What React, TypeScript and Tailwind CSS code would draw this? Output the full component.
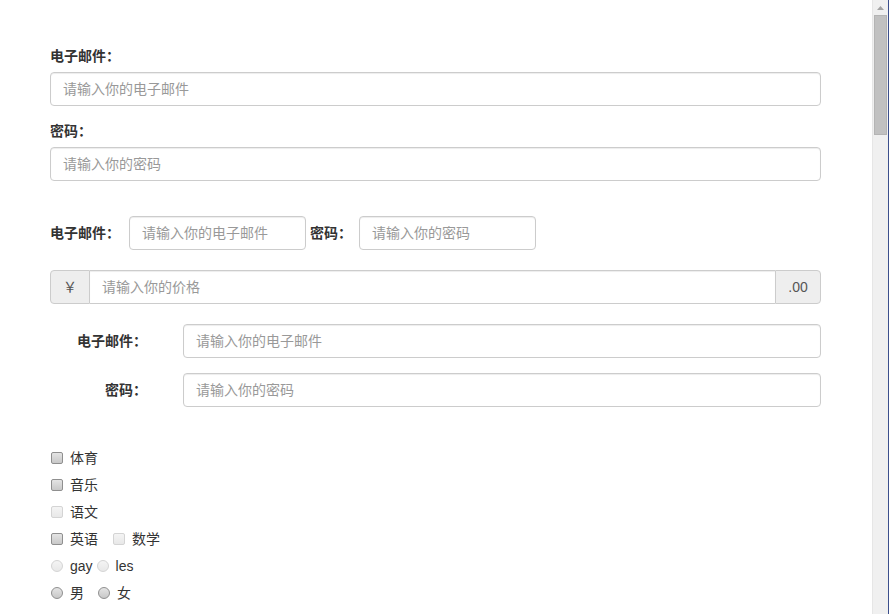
const font = { fontFamily: '"Liberation Sans", "Noto Sans CJK SC", sans-serif' }

const inputCls =
    "h-[34px] rounded-[4px] border border-[#cccccc] bg-white px-3 text-[14px] text-[#555] placeholder:text-[#999] shadow-[inset_0_1px_1px_rgba(0,0,0,0.075)] outline-none"

const Box = ({ disabled, round }: { disabled?: boolean, round?: boolean }) => (
    <span
        className={
            "inline-block w-[12px] h-[12px] border shrink-0 " +
            (round ? "rounded-full " : "rounded-[2px] ") +
            (disabled
                ? "border-[#d4d4d4] bg-gradient-to-b from-[#f4f4f4] to-[#e8e8e8]"
                : "border-[#8f8f8f] bg-gradient-to-b from-[#e4e4e4] to-[#c8c8c8]")
        }
    />
)

const Check = ({ label, disabled, round, className = "" }: { label: string, disabled?: boolean, round?: boolean, className?: string }) => (
    <label className={"inline-flex items-center gap-[7px] " + className}>
        <Box disabled={disabled} round={round} />
        <span>{label}</span>
    </label>
)

export default function App() {
    return (
        <div className="flex h-[614px] overflow-hidden bg-white text-[14px] text-[#333]" style={font}>
            <div className="flex-1 pl-[50px] pr-[51px] pt-[46px]">
                {/* basic form */}
                <div className="flex flex-col">
                    <label className="font-bold leading-5 mb-[6px]">电子邮件：</label>
                    <input className={inputCls + " w-full"} placeholder="请输入你的电子邮件" />
                </div>
                <div className="flex flex-col mt-[15px]">
                    <label className="font-bold leading-5 mb-[6px]">密码：</label>
                    <input className={inputCls + " w-full"} placeholder="请输入你的密码" />
                </div>

                {/* inline form */}
                <div className="flex items-center mt-[35px]">
                    <label className="font-bold">电子邮件：</label>
                    <input className={inputCls + " w-[177px] ml-[9px]"} placeholder="请输入你的电子邮件" />
                    <label className="font-bold ml-[4px]">密码：</label>
                    <input className={inputCls + " w-[177px] ml-[7px]"} placeholder="请输入你的密码" />
                </div>

                {/* input group */}
                <div className="flex mt-[20px] h-[34px]">
                    <span className="w-[40px] flex items-center justify-center rounded-l-[4px] border border-[#ccc] bg-[#eeeeee] text-[#555]">￥</span>
                    <input className="flex-1 min-w-0 border-y border-[#ccc] px-3 text-[14px] placeholder:text-[#999] outline-none shadow-[inset_0_1px_1px_rgba(0,0,0,0.075)]" placeholder="请输入你的价格" />
                    <span className="w-[46px] flex items-center justify-center rounded-r-[4px] border border-[#ccc] bg-[#eeeeee] text-[#555]">.00</span>
                </div>

                {/* horizontal form */}
                <div className="flex items-center mt-[20px]">
                    <label className="w-[97px] text-right font-bold shrink-0">电子邮件：</label>
                    <input className={inputCls + " flex-1 ml-[36px]"} placeholder="请输入你的电子邮件" />
                </div>
                <div className="flex items-center mt-[15px]">
                    <label className="w-[97px] text-right font-bold shrink-0">密码：</label>
                    <input className={inputCls + " flex-1 ml-[36px]"} placeholder="请输入你的密码" />
                </div>

                {/* checkboxes & radios */}
                <div className="mt-[41px] flex flex-col gap-[7px] pl-[1px] leading-5">
                    <Check label="体育" />
                    <Check label="音乐" />
                    <Check label="语文" disabled />
                    <div className="flex">
                        <Check label="英语" />
                        <Check label="数学" disabled className="ml-[15px]" />
                    </div>
                    <div className="flex">
                        <Check label="gay" disabled round />
                        <Check label="les" disabled round className="ml-[4px]" />
                    </div>
                    <div className="flex">
                        <Check label="男" round />
                        <Check label="女" round className="ml-[14px]" />
                    </div>
                </div>
            </div>

            {/* scrollbar */}
            <div className="w-[17px] flex flex-col bg-[#f0f0f0] border-l border-[#e6e6e6] border-r border-r-[#3c4f8c]">
                <div className="h-[15px] flex items-center justify-center">
                    <svg width="7" height="4" viewBox="0 0 7 4"><path d="M0 4 L3.5 0 L7 4 Z" fill="#a3a3a3" /></svg>
                </div>
                <div className="mx-[1px] h-[120px] bg-[#c1c1c1] border border-[#b4b4b4]" />
            </div>
        </div>
    )
}
